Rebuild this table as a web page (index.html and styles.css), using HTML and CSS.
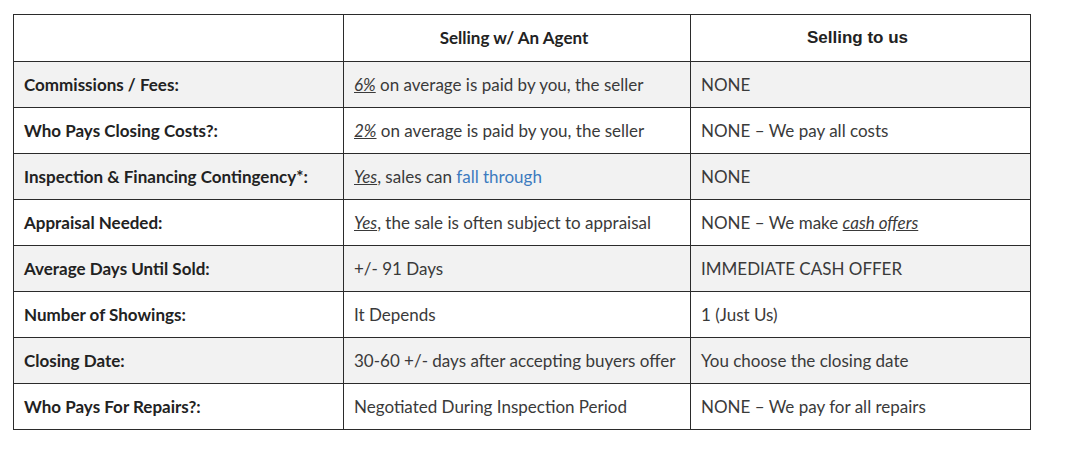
FILE: index.html
```html
<!DOCTYPE html>
<html>
<head>
<meta charset="utf-8">
<link rel="stylesheet" href="styles.css">
</head>
<body>
<table class="compare">
  <colgroup>
    <col class="c1"><col class="c2"><col class="c3">
  </colgroup>
  <thead>
    <tr>
      <th></th>
      <th class="h-agent">Selling w/ An Agent</th>
      <th class="h-us">Selling to us</th>
    </tr>
  </thead>
  <tbody>
    <tr class="alt">
      <td class="label">Commissions / Fees:</td>
      <td><span class="em">6%</span> on average is paid by you, the seller</td>
      <td>NONE</td>
    </tr>
    <tr>
      <td class="label">Who Pays Closing Costs?:</td>
      <td><span class="em">2%</span> on average is paid by you, the seller</td>
      <td>NONE – We pay all costs</td>
    </tr>
    <tr class="alt">
      <td class="label">Inspection &amp; Financing Contingency*:</td>
      <td><span class="em">Yes</span>, sales can <a class="link" href="#">fall through</a></td>
      <td>NONE</td>
    </tr>
    <tr>
      <td class="label">Appraisal Needed:</td>
      <td><span class="em">Yes</span>, the sale is often subject to appraisal</td>
      <td>NONE – We make <span class="em">cash offers</span></td>
    </tr>
    <tr class="alt">
      <td class="label">Average Days Until Sold:</td>
      <td>+/- 91 Days</td>
      <td>IMMEDIATE CASH OFFER</td>
    </tr>
    <tr>
      <td class="label">Number of Showings:</td>
      <td>It Depends</td>
      <td>1 (Just Us)</td>
    </tr>
    <tr class="alt">
      <td class="label">Closing Date:</td>
      <td>30-60 +/- days after accepting buyers offer</td>
      <td>You choose the closing date</td>
    </tr>
    <tr>
      <td class="label">Who Pays For Repairs?:</td>
      <td>Negotiated During Inspection Period</td>
      <td>NONE – We pay for all repairs</td>
    </tr>
  </tbody>
</table>
</body>
</html>
```

FILE: styles.css
```css
html, body {
  margin: 0;
  padding: 0;
  background: #ffffff;
}
body {
  padding: 14px 0 0 13px;
  font-family: "Lato", "Liberation Sans", sans-serif;
  font-size: 17px;
  color: #3a3a3a;
}
.compare {
  border-collapse: collapse;
  table-layout: fixed;
  width: 1017px;
}
.c1 { width: 330px; }
.c2 { width: 347px; }
.c3 { width: 340px; }
.compare th,
.compare td {
  border: 1px solid #2b2b2b;
  height: 46px;
  padding: 0 10px;
  box-sizing: border-box;
  vertical-align: middle;
  text-align: left;
  line-height: 22px;
}
.compare th {
  height: 47px;
  text-align: center;
  font-weight: 700;
  color: #222222;
  padding-right: 16px;
}
.h-us {
  font-family: "Liberation Sans", Arial, sans-serif;
  color: #111111;
}
.alt td {
  background: #f2f2f2;
}
.label {
  font-weight: 700;
  color: #222222;
}
.em {
  font-style: italic;
  text-decoration: underline;
}
.link {
  color: #3d7bbf;
  text-decoration: none;
}
```
